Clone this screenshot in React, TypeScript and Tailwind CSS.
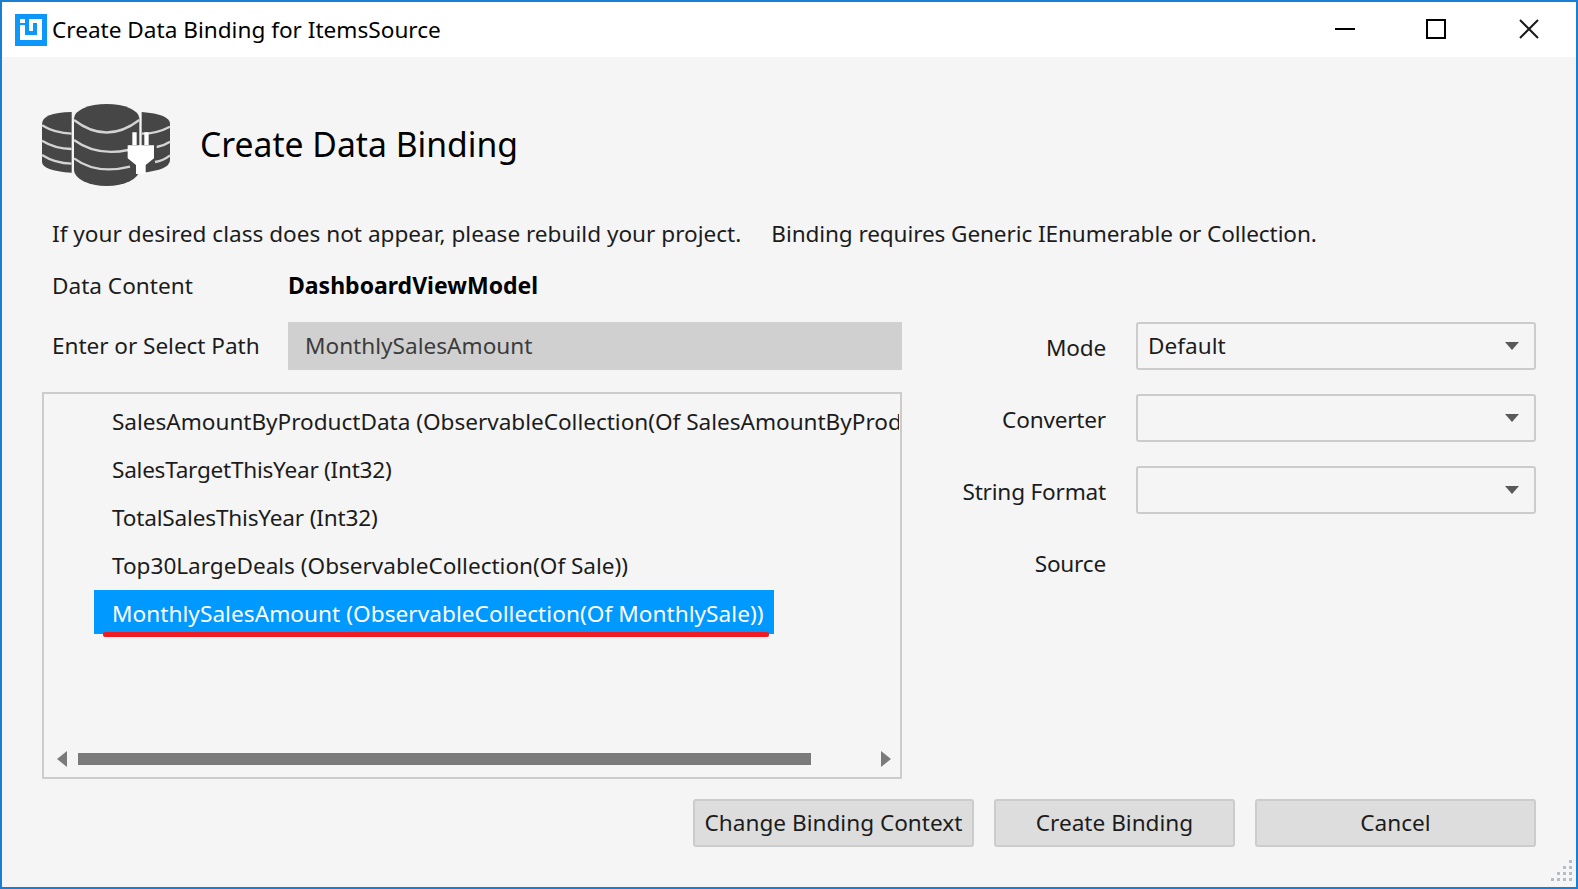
import React from 'react';

const rows = [
  { text: 'SalesAmountByProductData (ObservableCollection(Of SalesAmountByProductData))', spacing: 'tracking-[-0.03px]' },
  { text: 'SalesTargetThisYear (Int32)', spacing: 'tracking-[-0.26px]' },
  { text: 'TotalSalesThisYear (Int32)', spacing: 'tracking-[-0.19px]' },
  { text: 'Top30LargeDeals (ObservableCollection(Of Sale))', spacing: 'tracking-[-0.02px]' },
];

const AppIcon = () => (
  <svg width="32" height="32" viewBox="0 0 32 32" className="shrink-0">
    <rect width="32" height="32" fill="#0e97fa" />
    <path d="M5 5h5v4H5zM5 11h5v10h12V9h-4v8h-4V5h13v21H5z" fill="#fff" />
  </svg>
);

const DatabaseIcon = () => (
  <svg width="135" height="90" viewBox="0 0 405 270" className="shrink-0">
    <path d="M95 36Q6 38 6 72V185Q6 212 95 218Z" fill="#464646" />
    <path d="M305 36Q390 42 390 72V180Q390 210 305 218Z" fill="#464646" />
    <path d="M102 55A98 43 0 0 1 298 55V210A98 48 0 0 1 102 210Z" fill="#464646" />
    <g stroke="#d4d4d4" strokeWidth="7" fill="none">
      <path d="M6 76Q45 100 95 101M6 122Q45 146 95 147M6 165Q45 190 95 191" />
      <path d="M305 101Q350 101 390 80M350 141Q370 138 390 125M345 186Q370 182 390 166" />
      <path d="M102 60Q200 135 298 60M102 120Q170 170 265 150M102 175Q170 225 270 200" />
    </g>
    <path d="M277 97h13v38h-13zM313 97h13v38h-13zM263 136h79v39l-25 20v27h-29v-27l-25-20z" fill="#fff" />
  </svg>
);

const Combo = ({ value = '' }: { value?: string }) => (
  <div className="w-[400px] h-12 border-2 border-[#cccccc] rounded-[3px] flex items-center justify-between pl-[10px] pr-[15px]">
    <span>{value}</span>
    <svg width="14" height="8" viewBox="0 0 14 8"><path d="M0 0h14L7 8z" fill="#5a5a5a" /></svg>
  </div>
);

const Button = ({ label, width }: { label: string; width: string }) => (
  <div className={`${width} h-12 bg-[#dddddd] border-2 border-[#cccccc] rounded-[3px] flex items-center justify-center`}>{label}</div>
);

const FormRow = ({ label, className = '', children }: { label: string; className?: string; children: React.ReactNode }) => (
  <div className={`flex items-center justify-end h-12 ${className}`}>
    <span className="mr-[30px] pt-1 tracking-[-0.2px]">{label}</span>
    {children}
  </div>
);

export default function App() {
  return (
    <div className="relative w-[1578px] h-[889px] border-2 border-[#1a7fd4] bg-[#f5f5f5] text-[#1c1c1c] text-[22.6px] leading-none font-['Noto_Sans',sans-serif] overflow-hidden">
      <div className="h-[55px] bg-white flex items-center pl-[13px] pr-[37px] text-black">
        <AppIcon />
        <span className="ml-[5px] flex-1 pt-[2px]">Create Data Binding for ItemsSource</span>
        <div className="flex items-center -mt-px">
          <div className="w-5 h-0.5 bg-black" />
          <div className="w-5 h-5 border-2 border-black ml-[71px]" />
          <svg width="20" height="20" viewBox="0 0 20 20" className="ml-[73px]"><path d="M1 1l18 18M19 1L1 19" stroke="#1a1a1a" strokeWidth="2" /></svg>
        </div>
      </div>

      <div className="flex items-center pl-[38px] mt-[43px] h-[90px]">
        <DatabaseIcon />
        <span className="ml-[25px] text-[33.7px] text-black">Create Data Binding</span>
      </div>

      <div className="pl-[50px] mt-[27px] h-[34px] flex items-center gap-[30px]">
        <span>If your desired class does not appear, please rebuild your project.</span>
        <span className="tracking-[-0.11px]">Binding requires Generic IEnumerable or Collection.</span>
      </div>

      <div className="pl-[50px] mt-[18px] h-[34px] flex items-center">
        <span className="w-[236px]">Data Content</span>
        <span className="font-bold text-[23px] text-black pb-[2px]">DashboardViewModel</span>
      </div>

      <div className="flex mt-[19px] px-10">
        <div className="w-[860px]">
          <div className="flex items-center h-12">
            <span className="w-[246px] pl-[10px] tracking-[-0.05px]">Enter or Select Path</span>
            <div className="w-[614px] h-12 bg-[#d0d0d0] flex items-center pl-[17px] text-[#3c3c3c]">MonthlySalesAmount</div>
          </div>
          <div className="relative mt-[22px] w-[860px] h-[387px] border-2 border-[#cccccc] overflow-hidden">
            <div className="pt-1 pl-[50px]">
              {rows.map((r) => (
                <div key={r.text} className={`h-12 w-[805px] flex items-center pl-[18px] whitespace-nowrap overflow-hidden ${r.spacing}`}>{r.text}</div>
              ))}
              <div className="h-11 w-[680px] bg-[#0099ff] text-white flex items-center pl-[18px] pt-1 whitespace-nowrap tracking-[0.05px]">
                MonthlySalesAmount (ObservableCollection(Of MonthlySale))
              </div>
            </div>
            <div className="absolute left-[59px] top-[238px] w-[666px] h-[5px] rounded-[2px] bg-[#ee1c25]" />
            <div className="absolute left-[13px] right-[9px] bottom-[10px] flex items-center justify-between">
              <svg width="11" height="16" viewBox="0 0 11 16"><path d="M10 0v16L0 8z" fill="#7a7a7a" /></svg>
              <div className="absolute left-[21px] w-[733px] h-3 bg-[#7a7a7a]" />
              <svg width="11" height="16" viewBox="0 0 11 16"><path d="M1 0v16l10-8z" fill="#7a7a7a" /></svg>
            </div>
          </div>
        </div>

        <div className="flex-1 flex flex-col">
          <FormRow label="Mode" className="tracking-normal"><Combo value="Default" /></FormRow>
          <FormRow label="Converter" className="mt-6"><Combo /></FormRow>
          <FormRow label="String Format" className="mt-6"><Combo /></FormRow>
          <FormRow label="Source" className="mt-6"><div className="w-[400px]" /></FormRow>
        </div>
      </div>

      <div className="flex justify-end gap-5 mt-5 pr-10">
        <Button label="Change Binding Context" width="w-[281px]" />
        <Button label="Create Binding" width="w-[241px]" />
        <Button label="Cancel" width="w-[281px]" />
      </div>

      <svg width="22" height="22" viewBox="0 0 22 22" className="absolute right-[3px] bottom-[5px]">
        <g fill="#b4becb">
          <rect x="18" y="0" width="3" height="3" />
          <rect x="12" y="6" width="3" height="3" /><rect x="18" y="6" width="3" height="3" />
          <rect x="6" y="12" width="3" height="3" /><rect x="12" y="12" width="3" height="3" /><rect x="18" y="12" width="3" height="3" />
          <rect x="0" y="18" width="3" height="3" /><rect x="6" y="18" width="3" height="3" /><rect x="12" y="18" width="3" height="3" /><rect x="18" y="18" width="3" height="3" />
        </g>
      </svg>
    </div>
  );
}
